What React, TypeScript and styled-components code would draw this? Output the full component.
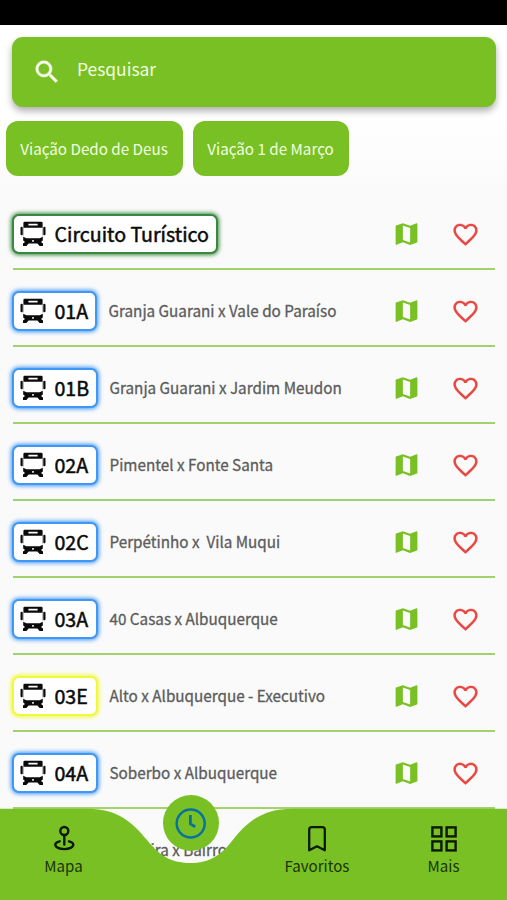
import React from "react";
import styled, { createGlobalStyle } from "styled-components";

const GREEN = "#79c024";

const Global = createGlobalStyle`
  * { box-sizing: border-box; }
  body { margin: 0; background: #fafafa; font-family: "Noto Sans CJK SC", "Noto Sans", sans-serif; }
`;

const Screen = styled.div`
  position: relative;
  width: 507px;
  height: 900px;
  overflow: hidden;
  display: flex;
  flex-direction: column;
  background: linear-gradient(#fff 0, #fff 110px, #fafafa 195px);
`;

const StatusBar = styled.div`
  height: 25px;
  flex: none;
  background: #000;
`;

const SearchBar = styled.label`
  display: flex;
  align-items: center;
  flex: none;
  height: 70px;
  margin: 12px 11px 0 12px;
  padding-left: 20px;
  gap: 15px;
  border-radius: 11px;
  background: ${GREEN};
  box-shadow: 0 4px 7px rgba(0, 0, 0, 0.32);
`;

const SearchText = styled.span`
  color: #f1ffe2;
  font-size: 17.4px;
  line-height: 24px;
  margin-top: -7px;
`;

const Chips = styled.div`
  display: flex;
  flex: none;
  gap: 10px;
  height: 55px;
  margin: 14px 0 17px 6px;
`;

const Chip = styled.button<{ $width: number }>`
  width: ${(p) => p.$width}px;
  padding: 0 1px 1px 0;
  border: 0;
  border-radius: 12px;
  background: ${GREEN};
  color: #f1ffe2;
  font-family: inherit;
  font-size: 15.2px;
  white-space: nowrap;
`;

const List = styled.ul`
  margin: 0;
  padding: 0 12px 0 13px;
  list-style: none;
`;

const Row = styled.li`
  display: flex;
  align-items: center;
  height: 77.05px;
  padding: 7px 0 0;
  border-bottom: 2px solid #a2d26c;
`;

const Badge = styled.div<{ $color: string; $width: number }>`
  display: flex;
  align-items: center;
  flex: none;
  width: ${(p) => p.$width}px;
  height: 40px;
  margin-left: -1px;
  padding-left: 6px;
  gap: 8.5px;
  border: 2px solid ${(p) => p.$color};
  border-radius: 7px;
  background: #fff;
  box-shadow: 0 0 4px 1px ${(p) => p.$color};

  svg {
    flex: none;
  }
`;

const Code = styled.span`
  color: #0a0a0a;
  font-size: 19.6px;
  line-height: 30px;
  white-space: nowrap;
  -webkit-text-stroke: 0.5px #0a0a0a;
`;

const RouteName = styled.span`
  flex: 1;
  margin: -2px 0 0 11.5px;
  color: #5c5c5c;
  font-size: 15.25px;
  line-height: 24px;
  white-space: pre;
  -webkit-text-stroke: 0.3px #5c5c5c;
`;

const Actions = styled.div`
  display: flex;
  align-items: center;
  gap: 30px;
  margin-left: auto;
  padding-right: 15px;
`;

const NextRow = styled.div`
  display: flex;
  align-items: center;
  height: 77px;
  padding: 5px 0 0 139px;
`;

const Nav = styled.nav`
  position: absolute;
  left: 0;
  right: 0;
  bottom: 0;
  height: 92px;
`;

const Wave = styled.svg`
  position: absolute;
  inset: 0;
`;

const Tabs = styled.div`
  position: relative;
  display: grid;
  grid-template-columns: 127px 127px 126px 127px;
  height: 92px;
`;

const Tab = styled.div`
  display: flex;
  flex-direction: column;
  align-items: center;
  padding-top: 16px;
  color: #1a3500;
  font-size: 15.1px;
  line-height: 22px;
`;

const ActiveTab = styled.div`
  display: flex;
  align-items: center;
  justify-content: center;
  justify-self: center;
  width: 56px;
  height: 56px;
  margin-top: -13px;
  border-radius: 50%;
  background: ${GREEN};
`;

const SearchIcon = () => (
  <svg width="30" height="30" viewBox="0 0 24 24" fill="#f8fff0" stroke="#f8fff0" strokeWidth=".4">
    <path d="M15.5 14h-.79l-.28-.27A6.47 6.47 0 0 0 16 9.5 6.5 6.5 0 1 0 9.5 16c1.61 0 3.09-.59 4.23-1.57l.27.28v.79l5 4.99L20.49 19zm-6 0C7.01 14 5 11.99 5 9.5S7.01 5 9.5 5 14 7.01 14 9.5 11.99 14 9.5 14" />
  </svg>
);

const BusIcon = () => (
  <svg width="26" height="26" viewBox="0 0 26 26" fill="#0a0a0a">
    <path fillRule="evenodd" d="M4.6.8h16.8q1 0 1.2 1L22.6 6.8H3.4l0-5q.2-1 1.2-1M8.4 2.8v1.6h9.2V2.8z" />
    <path d="M3.2 6.5v8M22.8 6.5v8" stroke="#777" strokeWidth=".7" />
    <rect x=".5" y="5.8" width="2.2" height="8.4" rx="1" />
    <rect x="23.3" y="5.8" width="2.2" height="8.4" rx="1" />
    <path
      fillRule="evenodd"
      d="M3.2 15.8l3.2 1.4h13.2l3.2-1.4v3.6l-1.8 1.6 2 1.6v2.3h-3.4l-2.2-2.3H8.6l-2.2 2.3H3v-2.3L5 21l-1.8-1.6zM12.2 18.9v1.8h1.6v-1.8z"
    />
  </svg>
);

const MapIcon = () => (
  <svg width="29" height="30" viewBox="0 0 24 24" fill={GREEN}>
    <path d="m20.5 3-.16.03L15 5.1 9 3 3.36 4.9c-.21.07-.36.25-.36.48V20.5c0 .28.22.5.5.5l.16-.03L9 18.9l6 2.1 5.64-1.9c.21-.07.36-.25.36-.48V3.5c0-.28-.22-.5-.5-.5M15 19l-6-2.11V5l6 2.11z" />
  </svg>
);

const HeartIcon = () => (
  <svg width="29" height="29" viewBox="0 0 24 24" fill="#e94842" stroke="#e94842" strokeWidth=".1">
    <path d="M16.5 3c-1.74 0-3.41.81-4.5 2.09C10.91 3.81 9.24 3 7.5 3 4.42 3 2 5.42 2 8.5c0 3.78 3.4 6.86 8.55 11.54L12 21.35l1.45-1.32C18.6 15.36 22 12.28 22 8.5 22 5.42 19.58 3 16.5 3m-4.4 15.55-.1.1-.1-.1C7.14 14.24 4 11.39 4 8.5 4 6.5 5.5 5 7.5 5c1.54 0 3.04.99 3.57 2.36h1.87C13.46 5.99 14.96 5 16.5 5c2 0 3.5 1.5 3.5 3.5 0 2.89-3.14 5.74-7.9 10.05" />
  </svg>
);

const ClockIcon = () => (
  <svg width="32" height="32" viewBox="0 0 32 32" fill="none" stroke="#08729f" strokeWidth="2.5">
    <circle cx="15.7" cy="16.5" r="14" />
    <path d="M15.4 8v9l4.8 2.8" strokeWidth="2.8" />
  </svg>
);

const PinIcon = () => (
  <svg width="26" height="30" viewBox="0 0 26 30" fill="none" stroke="#0b1a00" strokeWidth="2.4" strokeLinecap="round">
    <circle cx="13.3" cy="7" r="4" />
    <path d="M13.3 11.5v9M8.6 17.3c-3 .7-4.3 1.8-4.3 3.3 0 2.6 4 4.5 9 4.5s9-1.9 9-4.5c0-1.5-1.3-2.6-4.3-3.3" />
  </svg>
);

const BookmarkIcon = () => (
  <svg width="26" height="30" viewBox="0 0 26 30" fill="none" stroke="#0b1a00" strokeWidth="2.3" strokeLinejoin="round">
    <path d="M5.2 26.3V5.8Q5.2 3.2 7.8 3.2h10.4q2.6 0 2.6 2.6v20.5L13 22.3z" />
  </svg>
);

const GridIcon = () => (
  <svg width="28" height="30" viewBox="0 0 28 30" fill="none" stroke="#0b1a00" strokeWidth="2.4">
    <rect x="2.4" y="3.4" width="9" height="9" />
    <rect x="16.6" y="3.4" width="9" height="9" />
    <rect x="2.4" y="17.4" width="9" height="9" />
    <rect x="16.6" y="17.4" width="9" height="9" />
  </svg>
);

const BLUE = "#3f98f5";
const routes = [
  { code: "Circuito Turístico", name: "", color: "#39883f", width: 206 },
  { code: "01A", name: "Granja Guarani x Vale do Paraíso", color: BLUE, width: 85 },
  { code: "01B", name: "Granja Guarani x Jardim Meudon", color: BLUE, width: 86 },
  { code: "02A", name: "Pimentel x Fonte Santa", color: BLUE, width: 86 },
  { code: "02C", name: "Perpétinho x  Vila Muqui", color: BLUE, width: 86 },
  { code: "03A", name: "40 Casas x Albuquerque", color: BLUE, width: 86 },
  { code: "03E", name: "Alto x Albuquerque - Executivo", color: "#f0f83c", width: 86 },
  { code: "04A", name: "Soberbo x Albuquerque", color: BLUE, width: 86 },
];

export default function App() {
  return (
    <>
      <Global />
      <Screen>
        <StatusBar />
        <SearchBar>
          <SearchIcon />
          <SearchText>Pesquisar</SearchText>
        </SearchBar>
        <Chips>
          <Chip $width={177}>Viação Dedo de Deus</Chip>
          <Chip $width={156}>Viação 1 de Março</Chip>
        </Chips>
        <List>
          {routes.map((r) => (
            <Row key={r.code}>
              <Badge $color={r.color} $width={r.width}>
                <BusIcon />
                <Code>{r.code}</Code>
              </Badge>
              {r.name && <RouteName>{r.name}</RouteName>}
              <Actions>
                <MapIcon />
                <HeartIcon />
              </Actions>
            </Row>
          ))}
        </List>
        <NextRow>
          <RouteName>ira x Bairro</RouteName>
        </NextRow>
        <Nav>
          <Wave width="507" height="92" viewBox="0 0 507 92" fill={GREEN}>
            <path d="M0 .7H88C118 .7 133 15 147 32C158 46 170 55 190 55C210 55 221 47 232 33C247 14 262 .7 293 .7H507V92H0z" />
          </Wave>
          <Tabs>
            <Tab>
              <PinIcon />
              Mapa
            </Tab>
            <ActiveTab>
              <ClockIcon />
            </ActiveTab>
            <Tab>
              <BookmarkIcon />
              Favoritos
            </Tab>
            <Tab>
              <GridIcon />
              Mais
            </Tab>
          </Tabs>
        </Nav>
      </Screen>
    </>
  );
}
